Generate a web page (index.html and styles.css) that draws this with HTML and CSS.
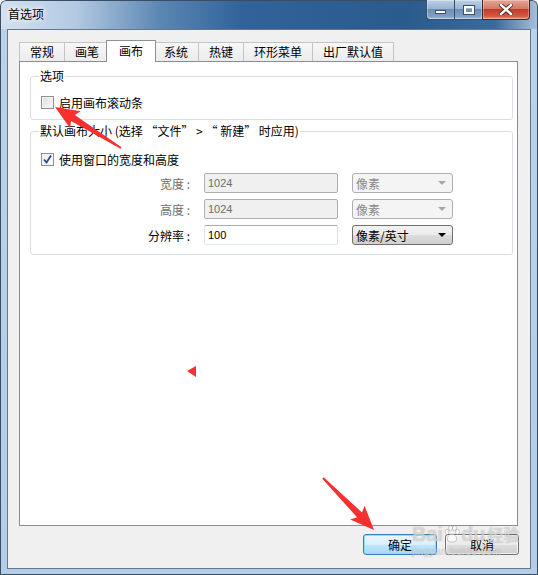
FILE: index.html
```html
<!DOCTYPE html>
<html lang="zh-CN">
<head>
    <meta charset="UTF-8">
    <title>首选项</title>
    <link rel="stylesheet" href="styles.css">
</head>
<body>
    <div class="window">
        <div class="titlebar">
            <span class="title">首选项</span>
            <div class="caption">
                <div class="cap-group">
                    <span class="cap cap-min"><i class="min-glyph"></i></span>
                    <span class="cap cap-max"><i class="max-glyph"></i></span>
                </div>
                <span class="cap-close">
                    <svg width="14" height="11" viewBox="0 0 14 11">
                        <path d="M2 1 L12 10 M12 1 L2 10" stroke="#4a2a26" stroke-width="4.2" stroke-linecap="square"/>
                        <path d="M2 1 L12 10 M12 1 L2 10" stroke="#fff" stroke-width="2.4" stroke-linecap="square"/>
                    </svg>
                </span>
            </div>
        </div>

        <div class="client">
            <div class="tabs">
                <span class="tab">常规</span>
                <span class="tab">画笔</span>
                <span class="tab active">画布</span>
                <span class="tab">系统</span>
                <span class="tab">热键</span>
                <span class="tab">环形菜单</span>
                <span class="tab">出厂默认值</span>
            </div>

            <div class="panel">
                <fieldset class="group group-options">
                    <legend>选项</legend>
                    <label class="check-row">
                        <span class="checkbox"></span>
                        <span>启用画布滚动条</span>
                    </label>
                </fieldset>

                <fieldset class="group group-size">
                    <legend>默认画布大小 (选择 “文件” &gt; “ 新建” 时应用)</legend>
                    <label class="check-row">
                        <span class="checkbox checked">
                            <svg width="11" height="11" viewBox="0 0 11 11">
                                <path d="M2 5.5 L4.5 8.5 L9 1.5" fill="none" stroke="#2c4a8a" stroke-width="1.8"/>
                            </svg>
                        </span>
                        <span>使用窗口的宽度和高度</span>
                    </label>
                    <div class="size-grid">
                        <span class="field-label disabled">宽度 :</span>
                        <input class="textbox" type="text" value="1024" disabled>
                        <div class="combo disabled"><span>像素</span><i class="arrow"></i></div>

                        <span class="field-label disabled">高度 :</span>
                        <input class="textbox" type="text" value="1024" disabled>
                        <div class="combo disabled"><span>像素</span><i class="arrow"></i></div>

                        <span class="field-label">分辨率 :</span>
                        <input class="textbox" type="text" value="100">
                        <div class="combo"><span>像素/英寸</span><i class="arrow"></i></div>
                    </div>
                </fieldset>
            </div>

            <div class="buttons">
                <button class="btn btn-default">确定</button>
                <button class="btn">取消</button>
            </div>
        </div>

        <!-- 教程标注 -->
        <svg class="annotations" width="538" height="575" viewBox="0 0 538 575">
            <polygon fill="#f5302f" points="55,107 80.7,111.2 74.8,115.1 121.5,147.2 120.5,148.8 71,121.1 70.1,128.2"/>
            <polygon fill="#f5302f" points="374,530 350.2,519.6 357,517.3 322.3,478.7 323.7,477.3 362,512.5 364.6,505.8"/>
            <polygon fill="#f5302f" points="187,371 196,366 196,377"/>
        </svg>

        <div class="watermark">
            <div class="wm-logo">
                <span>Bai</span>
                <svg class="paw" width="16" height="18" viewBox="0 0 16 18">
                    <g fill="rgba(255,255,255,0.6)" stroke="rgba(120,120,120,0.45)" stroke-width="0.8">
                        <ellipse cx="3" cy="7" rx="2" ry="2.6"/>
                        <ellipse cx="6.5" cy="3" rx="2" ry="2.6"/>
                        <ellipse cx="10.5" cy="3" rx="2" ry="2.6"/>
                        <ellipse cx="13.5" cy="7" rx="2" ry="2.6"/>
                        <path d="M8 9 C4 9 2.5 14 4 16 C6 17.5 10 17.5 12 16 C13.5 14 12 9 8 9 Z"/>
                    </g>
                </svg>
                <span>du</span><span class="wm-cn">经验</span>
            </div>
            <div class="wm-url">jingyan.baidu.com</div>
        </div>
    </div>
</body>
</html>
```

FILE: styles.css
```css
body {
    margin: 0;
    font-family: "Noto Sans CJK SC", "Liberation Sans", sans-serif;
    font-size: 12px;
    background: #fff;
}
.window {
    position: relative;
    width: 538px;
    height: 575px;
    box-sizing: border-box;
    display: flex;
    flex-direction: column;
    padding: 0 7px 6px 7px;
    border-radius: 6px 6px 0 0;
    overflow: hidden;
    background:
        linear-gradient(to right, #d3e1f0 0%, #b3cae2 14%, #5a86b2 30%, #31639a 45%, #2b5b8c 75%, #3a6a9a 92%, #a9c2dc 100%) top / 100% 29px no-repeat,
        linear-gradient(#bcd2ea, #b3cce8);
    box-shadow: inset 0 0 0 1px #3a4d63;
}
.titlebar {
    height: 29px;
    display: flex;
    align-items: flex-start;
    margin: 0 -7px;
    padding-left: 8px;
}
.title {
    line-height: 28px;
    color: #000;
    text-shadow: 0 0 6px #fff, 0 0 4px #fff;
}
.caption {
    margin-left: auto;
    margin-right: 8px;
    display: flex;
}
.cap-group {
    width: 55px;
    height: 19px;
    display: flex;
    border: 1px solid #3b4f6a;
    border-top: none;
    border-right: none;
    border-radius: 0 0 0 4px;
    background: linear-gradient(#bfd2e7, #98b3d2 45%, #6d8fb6 50%, #7f9fc4 85%, #9fbcda);
    box-shadow: inset 0 0 0 1px rgba(255, 255, 255, 0.35);
}
.cap {
    flex: 1;
    display: flex;
    justify-content: center;
    align-items: center;
}
.cap-min {
    border-right: 1px solid #3b4f6a;
}
.min-glyph {
    width: 9px;
    height: 2px;
    margin-top: 5px;
    background: #fff;
    border: 1px solid #3b4f6a;
}
.max-glyph {
    width: 6px;
    height: 4px;
    border: 2px solid #fff;
    outline: 1px solid #3b4f6a;
}
.cap-close {
    width: 46px;
    height: 19px;
    display: flex;
    justify-content: center;
    align-items: center;
    border: 1px solid #4d2320;
    border-top: none;
    border-radius: 0 0 4px 0;
    background: linear-gradient(#e6a796, #d47a66 45%, #c23b28 50%, #cf5a43 85%, #e69477);
    box-shadow: inset 0 0 0 1px rgba(255, 255, 255, 0.3);
}
.client {
    flex: 1;
    display: flex;
    flex-direction: column;
    border: 1px solid #677689;
    background: #f0f0f0;
    min-height: 0;
}

/* 选项卡 */
.tabs {
    display: flex;
    align-items: flex-end;
    padding: 10px 0 0 11px;
    position: relative;
    z-index: 1;
}
.tab {
    height: 18px;
    line-height: 18px;
    padding: 0 10px;
    border: 1px solid #c4c4c4;
    border-bottom: none;
    background: linear-gradient(#f7f7f7, #ececec);
    margin-right: -1px;
    color: #000;
}
.tab.active {
    height: 21px;
    line-height: 20px;
    padding: 0 12px;
    margin: 0 -3px -1px -3px;
    background: #fff;
    border-color: #8e9096;
    position: relative;
    z-index: 2;
}
.panel {
    flex: 1;
    margin: 0 12px 0 11px;
    border: 1px solid #898c95;
    background: #fff;
    padding: 6px 4px 0 10px;
}
.group {
    margin: 0;
    border: 1px solid #d5dfe5;
    border-radius: 3px;
    padding: 10px 8px 9px 8px;
    min-width: 0;
}
.group legend {
    padding: 0 1px;
    line-height: 16px;
}
.group-size {
    margin-top: 3px;
    padding-top: 12px;
}
.check-row {
    display: flex;
    align-items: center;
    gap: 5px;
    height: 16px;
    padding-left: 2px;
}
.checkbox {
    width: 11px;
    height: 11px;
    border: 1px solid #8f8f8f;
    background: linear-gradient(135deg, #dcdcdc, #fbfbfb);
    box-shadow: inset 0 0 0 1px #f4f4f4;
    display: flex;
    justify-content: center;
    align-items: center;
}
.checkbox.checked {
    background: linear-gradient(135deg, #e9ecf2, #fdfdfd);
}
.size-grid {
    display: grid;
    grid-template-columns: 151px 134px 101px;
    grid-auto-rows: 20px;
    column-gap: 14px;
    row-gap: 6px;
    margin-top: 6px;
    align-items: center;
}
.field-label {
    text-align: right;
    color: #000;
}
.field-label.disabled {
    color: #6d6d6d;
}
.textbox {
    box-sizing: border-box;
    width: 134px;
    height: 20px;
    margin: 0;
    padding: 0 3px;
    font-family: "Liberation Sans", sans-serif;
    font-size: 11px;
    color: #000;
    background: #fff;
    border: 1px solid;
    border-color: #abadb3 #dbdfe6 #e3e9ef #e2e3ea;
    border-radius: 2px;
    outline: none;
}
.textbox:disabled {
    color: #6d6d6d;
    background: #f0f0f0;
    border-color: #afafaf;
}
.combo {
    box-sizing: border-box;
    height: 20px;
    display: flex;
    align-items: center;
    justify-content: space-between;
    padding: 0 6px 0 3px;
    border: 1px solid #707070;
    border-radius: 3px;
    background: linear-gradient(#f2f2f2, #ebebeb 50%, #dddddd 51%, #cfcfcf);
    color: #000;
}
.combo.disabled {
    border-color: #afafaf;
    background: #f4f4f4;
    color: #8a8a8a;
}
.arrow {
    width: 0;
    height: 0;
    border-left: 4px solid transparent;
    border-right: 4px solid transparent;
    border-top: 4px solid #000;
}
.combo.disabled .arrow {
    border-top-color: #a8a8a8;
}

/* 底部按钮 */
.buttons {
    display: flex;
    justify-content: flex-end;
    gap: 8px;
    padding: 8px 11px 13px 0;
}
.btn {
    width: 74px;
    height: 21px;
    margin: 0;
    padding: 0;
    font-family: inherit;
    font-size: 12px;
    color: #000;
    border: 1px solid #707070;
    border-radius: 3px;
    background: linear-gradient(#f2f2f2, #ebebeb 50%, #dddddd 51%, #cfcfcf);
    box-shadow: inset 0 0 0 1px rgba(255, 255, 255, 0.7);
}
.btn-default {
    border-color: #3c7fb1;
    background: linear-gradient(#eaf6fd, #d9f0fc 50%, #bee6fd 51%, #a7d9f5);
    box-shadow: inset 0 0 0 1px #8fdcf8;
}

.annotations {
    position: absolute;
    left: 0;
    top: 0;
    pointer-events: none;
}
.watermark {
    position: absolute;
    left: 412px;
    top: 522px;
    color: rgba(255, 255, 255, 0.55);
    text-shadow: 0 0 1px rgba(110, 110, 110, 0.6);
    pointer-events: none;
    font-family: "Liberation Sans", sans-serif;
}
.wm-logo {
    display: flex;
    align-items: center;
    font-size: 20px;
    font-weight: bold;
    line-height: 24px;
}
.paw {
    margin: 0 1px;
}
.wm-cn {
    font-family: "Noto Sans CJK SC", sans-serif;
    font-size: 16px;
    margin-left: 2px;
}
.wm-url {
    font-size: 10px;
    line-height: 12px;
    letter-spacing: 0.5px;
}
```
